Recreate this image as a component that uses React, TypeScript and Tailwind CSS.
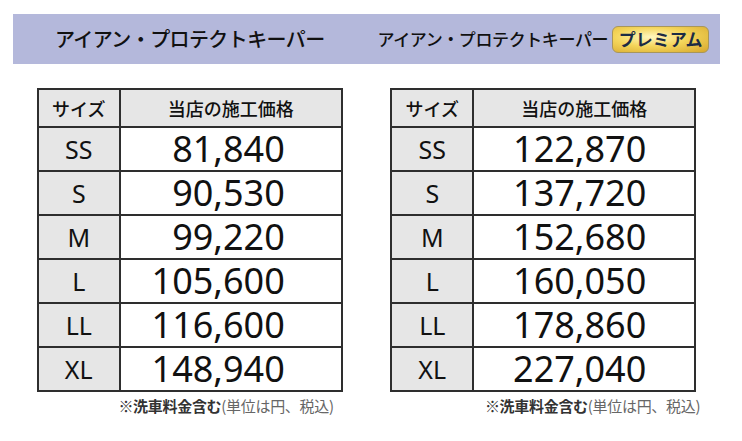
import React from "react";

const jp = { fontFamily: '"Noto Sans CJK JP", "Noto Sans", sans-serif' };
const num = { fontFamily: '"Noto Sans", "Open Sans", sans-serif' };

const left = ["81,840", "90,530", "99,220", "105,600", "116,600", "148,940"];
const right = ["122,870", "137,720", "152,680", "160,050", "178,860", "227,040"];
const sizes = ["SS", "S", "M", "L", "LL", "XL"];

function PriceTable({ prices, pr, noteMr }: { prices: string[]; pr: string; noteMr: string }) {
  return (
    <div className="flex flex-col items-end w-[306px]">
      <table className="w-[306px] border-collapse border-2 border-[#2e2e2e]">
        <tbody>
          <tr className="h-[38px] bg-[#e6e6e6]">
            <td className="w-[82px] border-2 border-[#2e2e2e] text-center text-[18px] font-medium text-[#111]" style={jp}>
              サイズ
            </td>
            <td className="border-2 border-[#2e2e2e] text-center text-[18px] font-medium text-[#111]" style={jp}>
              当店の施工価格
            </td>
          </tr>
          {prices.map((p, i) => (
            <tr key={i} className="h-[44px]">
              <td className="bg-[#e6e6e6] border-2 border-[#2e2e2e] text-center text-[25px] leading-[30px] text-[#111]" style={num}>
                {sizes[i]}
              </td>
              <td className={`bg-white border-2 border-[#2e2e2e] text-right text-[36px] leading-[40px] text-[#111] ${pr}`} style={num}>
                {p}
              </td>
            </tr>
          ))}
        </tbody>
      </table>
      <div className={`mt-[6px] text-[15px] leading-none whitespace-nowrap tracking-[-0.3px] ${noteMr}`} style={jp}>
        <span className="font-bold text-[#333]">※洗車料金含む</span>
        <span className="text-[#666]">(単位は円、税込)</span>
      </div>
    </div>
  );
}

export default function App() {
  return (
    <div className="w-[742px] h-[441px] bg-white pt-[14px] pl-[13px]">
      <div className="w-[707px] h-[50px] bg-[#b4b8db] grid grid-cols-2">
        <div className="flex items-center justify-center text-[20px] font-medium text-[#111] tracking-[-0.6px]" style={jp}>
          アイアン・プロテクトキーパー
        </div>
        <div className="flex items-center justify-center gap-[2px]">
          <span className="text-[17px] font-medium text-[#111] tracking-[-0.4px]" style={jp}>
            アイアン・プロテクトキーパー
          </span>
          <span
            className="ml-[2px] flex items-center justify-center w-[97px] h-[27px] rounded-[6px] border border-[#a8965a] bg-[radial-gradient(ellipse_at_40%_40%,#fff7c0_0%,#f4d55a_45%,#d6a72c_100%)] text-[17px] font-bold text-[#1b2b45]"
            style={jp}
          >
            プレミアム
          </span>
        </div>
      </div>
      <div className="w-[707px] grid grid-cols-2 mt-[24px]">
        <div className="flex justify-center">
          <PriceTable prices={left} pr="pr-[56px]" noteMr="mr-[9px]" />
        </div>
        <div className="flex justify-center">
          <PriceTable prices={right} pr="pr-[48px]" noteMr="mr-[-4px]" />
        </div>
      </div>
    </div>
  );
}
